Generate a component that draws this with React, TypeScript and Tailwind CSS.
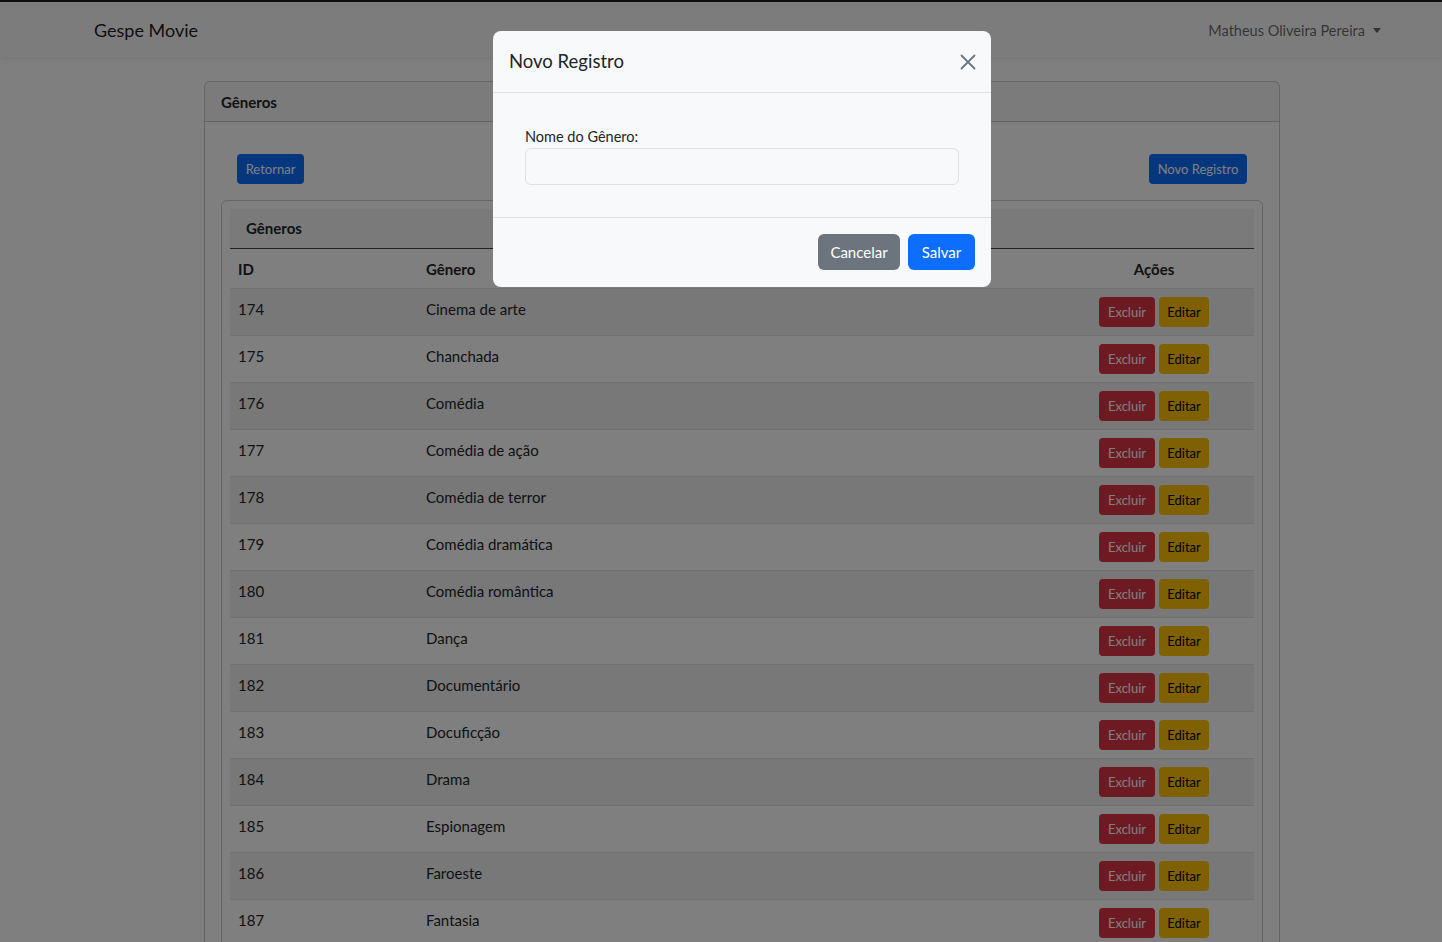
import React from "react";

const rows: [number, string][] = [
  [174, "Cinema de arte"],
  [175, "Chanchada"],
  [176, "Comédia"],
  [177, "Comédia de ação"],
  [178, "Comédia de terror"],
  [179, "Comédia dramática"],
  [180, "Comédia romântica"],
  [181, "Dança"],
  [182, "Documentário"],
  [183, "Docuficção"],
  [184, "Drama"],
  [185, "Espionagem"],
  [186, "Faroeste"],
  [187, "Fantasia"],
  [188, "Ficção científica"],
  [189, "Guerra"],
];

export default function App() {
  return (
    <div className="relative min-h-screen overflow-hidden bg-white font-['Lato',sans-serif] text-[#212529] border-t-2 border-[#1a1a1a]">
      <nav className="flex h-[55px] items-center justify-between bg-[#f8f9fa] pl-[94px] pr-[61px] shadow-[0_2px_4px_rgba(0,0,0,0.08)]">
        <span className="pt-[2px] text-[18px] text-black/90">Gespe Movie</span>
        <span className="flex items-center gap-[8px] pt-[2px] text-[14.5px] text-black/60">
          Matheus Oliveira Pereira
          <span className="inline-block h-0 w-0 border-x-[4px] border-t-[5px] border-x-transparent border-t-black/60" />
        </span>
      </nav>

      <main className="pt-[24px]">
        <div className="ml-[204px] w-[1076px] rounded-[6px] border border-black/20">
          <div className="flex h-[40px] items-center border-b border-black/20 bg-black/[0.03] px-4 pt-[1px] text-[15px] font-bold">
            Gêneros
          </div>
          <div className="p-4">
            <div className="flex items-center justify-between px-4 pt-4">
              <button className="h-[30px] w-[67px] rounded-[4px] bg-[#0d6efd] pt-[1px] text-[13px] text-white">Retornar</button>
              <button className="h-[30px] w-[98px] rounded-[4px] bg-[#0d6efd] pt-[1px] text-[13px] text-white">Novo Registro</button>
            </div>
            <div className="mt-4 rounded-[6px] border border-black/20 p-2">
              <table className="w-full border-collapse text-left text-[15px]">
                <thead>
                  <tr className="bg-black/[0.04]">
                    <th colSpan={3} className="h-[39px] px-4 font-bold">Gêneros</th>
                  </tr>
                  <tr className="border-t border-[#444]">
                    <th className="w-[188px] px-2 pb-2 pt-[9px] font-bold">ID</th>
                    <th className="px-2 pb-2 pt-[9px] font-bold">Gênero</th>
                    <th className="w-[200px] px-2 pb-2 pt-[9px] text-center font-bold">Ações</th>
                  </tr>
                </thead>
                <tbody>
                  {rows.map(([id, name], i) => (
                    <tr key={id} className={`border-t border-[#dee2e6] ${i % 2 === 0 ? "bg-black/[0.06]" : ""}`}>
                      <td className="h-[46px] px-2 pb-2 pt-[9px] align-top">{id}</td>
                      <td className="px-2 pb-2 pt-[9px] align-top">{name}</td>
                      <td className="px-2 pb-2 pt-[8px] align-top">
                        <div className="flex justify-center gap-[4px]">
                          <button className="h-[30px] w-[56px] rounded-[4px] bg-[#dc3545] pt-[1px] text-[13px] text-white">Excluir</button>
                          <button className="h-[30px] w-[50px] rounded-[4px] bg-[#ffc107] pt-[1px] text-[13px] text-black">Editar</button>
                        </div>
                      </td>
                    </tr>
                  ))}
                </tbody>
              </table>
            </div>
          </div>
        </div>
      </main>

      <div className="fixed inset-0 bg-black/50" />
      <div className="fixed left-[493px] top-[31px] w-[498px] rounded-[8px] bg-[#f8f9fa]">
        <div className="flex h-[62px] items-center justify-between border-b border-[#dee2e6] px-4">
          <span className="text-[18.5px] text-[#212529]">Novo Registro</span>
          <svg width="16" height="16" viewBox="0 0 16 16" className="mr-[-1px]">
            <path d="M1.5 1.5L14.5 14.5M14.5 1.5L1.5 14.5" stroke="#6c757d" strokeWidth="1.8" strokeLinecap="round" />
          </svg>
        </div>
        <div className="p-8">
          <label className="block text-[14.5px] leading-[23px]">Nome do Gênero:</label>
          <div className="h-[37px] w-full rounded-[6px] border border-[#dee2e6] bg-[#f8f9fa]" />
        </div>
        <div className="flex justify-end gap-2 border-t border-[#dee2e6] px-4 pb-[17px] pt-4">
          <button className="h-[36px] w-[82px] rounded-[6px] bg-[#6c757d] text-[15px] text-white">Cancelar</button>
          <button className="h-[36px] w-[67px] rounded-[6px] bg-[#0d6efd] text-[15px] text-white">Salvar</button>
        </div>
      </div>
    </div>
  );
}
